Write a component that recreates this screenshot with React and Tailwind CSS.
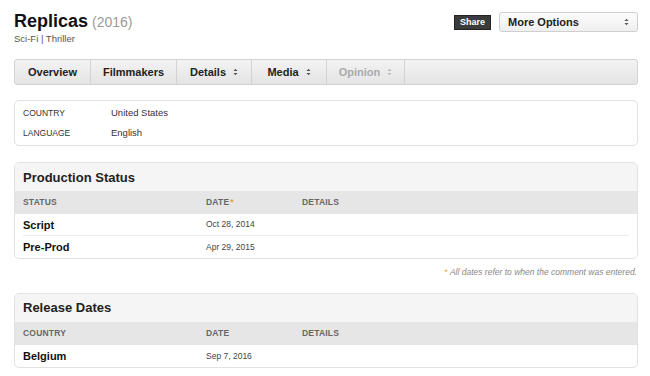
import React from "react";

const Updown = ({ className = "" }) => (
  <svg width="5" height="8" viewBox="0 0 5 8" className={className}>
    <path d="M0.5 3 L2.5 0.8 L4.5 3 Z M0.5 5 L2.5 7.2 L4.5 5 Z" fill="currentColor" />
  </svg>
);

const tabs = [
  { label: "Overview", w: "w-[76px]" },
  { label: "Filmmakers", w: "w-[86px]" },
  { label: "Details", w: "w-[75px]", menu: true },
  { label: "Media", w: "w-[75px]", menu: true },
  { label: "Opinion", w: "w-[78px]", menu: true, dim: true },
];

const statusRows = [
  { status: "Script", date: "Oct 28, 2014" },
  { status: "Pre-Prod", date: "Apr 29, 2015" },
];

const Section = ({ title, first, note, rows }) => (
  <div className="ml-[14px] mr-[12px] rounded-[5px] border border-[#e2e2e2] overflow-hidden bg-white">
    <div className="h-[28px] bg-[#f5f5f5] px-[8px] flex items-center">
      <h2 className="text-[13px] font-bold text-[#222]">{title}</h2>
    </div>
    <div className="h-[23px] bg-[#e6e6e6] flex items-center px-[8px] text-[8.5px] font-bold text-[#666] tracking-[0.2px]">
      <div className="w-[183px]">{first}</div>
      <div className="w-[96px]">
        DATE{note && <span className="text-[#e8a33a] ml-[1px]">*</span>}
      </div>
      <div>DETAILS</div>
    </div>
    <div className="px-[8px]">
      {rows.map((r, i) => (
        <div
          key={r.status}
          className={`h-[22px] flex items-center ${i < rows.length - 1 ? "border-b border-[#ececec]" : ""}`}
        >
          <div className="w-[183px] text-[11px] font-bold text-[#111]">{r.status}</div>
          <div className="text-[8.5px] text-[#444]">{r.date}</div>
        </div>
      ))}
    </div>
  </div>
);

const App = () => {
  return (
    <div className="w-[650px] h-[376px] bg-white overflow-hidden font-['Liberation_Sans',Arial,sans-serif]">
      <div className="flex items-start justify-between pl-[12px] pr-[12px] pt-[12px]">
        <div className="pl-[2px]">
          <div className="flex items-baseline gap-[4px] leading-none">
            <h1 className="text-[18px] font-bold text-[#111]">Replicas</h1>
            <span className="text-[14px] text-[#999]">(2016)</span>
          </div>
          <div className="text-[9.5px] text-[#555] mt-[2px]">Sci-Fi | Thriller</div>
        </div>
        <div className="flex items-center gap-[8px]">
          <button className="h-[15px] px-[5px] bg-[#3b3b3b] border border-[#222] text-white text-[9px] font-bold leading-none">
            Share
          </button>
          <div className="w-[139px] h-[20px] rounded-[3px] border border-[#cfcfcf] bg-gradient-to-b from-[#fcfcfc] to-[#efefef] flex items-center justify-between px-[8px]">
            <span className="text-[11px] font-bold text-[#222]">More Options</span>
            <Updown className="text-[#555]" />
          </div>
        </div>
      </div>

      <div className="ml-[14px] mr-[12px] mt-[13px] h-[26px] rounded-[3px] border border-[#d3d3d3] bg-gradient-to-b from-[#f3f3f3] to-[#e4e4e4] flex">
        {tabs.map((t) => (
          <div
            key={t.label}
            className={`${t.w} h-full flex items-center justify-center gap-[7px] border-r border-[#d3d3d3] text-[11px] font-bold ${t.dim ? "text-[#aaa]" : "text-[#222]"}`}
          >
            {t.label}
            {t.menu && <Updown className={t.dim ? "text-[#bbb]" : "text-[#555]"} />}
          </div>
        ))}
      </div>

      <div className="ml-[14px] mr-[12px] mt-[15px] h-[46px] rounded-[5px] border border-[#e2e2e2] px-[8px] flex flex-col justify-center gap-[6px] text-[9.5px]">
        <div className="flex items-center">
          <div className="w-[88px] text-[8.5px] text-[#333]">COUNTRY</div>
          <div className="text-[#333]">United States</div>
        </div>
        <div className="flex items-center">
          <div className="w-[88px] text-[8.5px] text-[#333]">LANGUAGE</div>
          <div className="text-[#333]">English</div>
        </div>
      </div>

      <div className="mt-[16px]">
        <Section title="Production Status" first="STATUS" note rows={statusRows} />
      </div>

      <div className="ml-[14px] mr-[13px] mt-[7px] text-right text-[8.5px] italic text-[#888]">
        <span className="text-[#e8a33a] not-italic">*</span> All dates refer to when the comment was entered.
      </div>

      <div className="mt-[14px]">
        <Section title="Release Dates" first="COUNTRY" rows={[{ status: "Belgium", date: "Sep 7, 2016" }]} />
      </div>
    </div>
  );
};

export default App;
